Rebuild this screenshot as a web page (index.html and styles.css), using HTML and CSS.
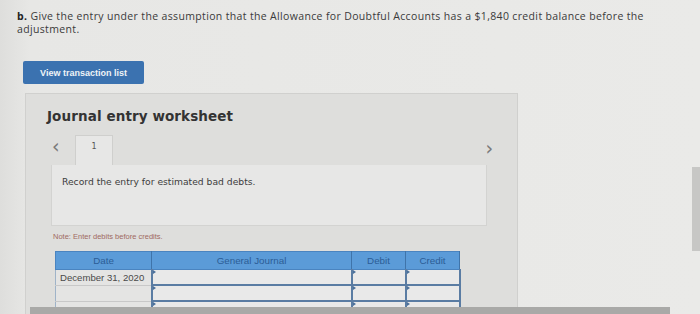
FILE: index.html
```html
<!DOCTYPE html>
<html>
<head>
<meta charset="utf-8">
<link rel="stylesheet" href="styles.css">
</head>
<body>
<div class="page">
  <p class="question">b. Give the entry under the assumption that the Allowance for Doubtful Accounts has a $1,840 credit balance before the adjustment.</p>
  <button class="btn">View transaction list</button>
  <section class="panel">
    <h2 class="title">Journal entry worksheet</h2>
    <div class="nav">
      <span class="chev left">&lsaquo;</span>
      <span class="tab">1</span>
      <span class="chev right">&rsaquo;</span>
    </div>
    <div class="box">Record the entry for estimated bad debts.</div>
    <p class="note">Note: Enter debits before credits.</p>
    <table class="journal">
      <thead>
        <tr><th class="c-date">Date</th><th class="c-gj">General Journal</th><th class="c-dr">Debit</th><th class="c-cr">Credit</th></tr>
      </thead>
      <tbody>
        <tr><td class="date">December 31, 2020</td><td class="in"></td><td class="in"></td><td class="in"></td></tr>
        <tr><td class="date"></td><td class="in"></td><td class="in"></td><td class="in"></td></tr>
        <tr><td class="date"></td><td class="in"></td><td class="in"></td><td class="in"></td></tr>
      </tbody>
    </table>
  </section>
</div>
<div class="scrollbar"></div>
<div class="bottombar"></div>
</body>
</html>
```
FILE: styles.css
```css
html, body {
  margin: 0;
  padding: 0;
  height: 314px;
  overflow: hidden;
}
body {
  background: linear-gradient(90deg, #dededc 0px, #e7e7e5 30px, #e9e9e7 500px, #eaeae8 700px);
  font-family: "Liberation Sans", Arial, sans-serif;
  color: #333;
}
.page {
  padding: 10px 0 0 17px;
}
.question {
  margin: 0;
  width: 645px;
  font-family: "Open Sans", "Liberation Sans", sans-serif;
  font-size: 10.5px;
  letter-spacing: 0.35px;
  line-height: 13px;
  color: #3a3a3a;
}
.question::first-letter {
  font-weight: bold;
  color: #222;
}
.btn {
  display: block;
  margin: 25px 0 0 6px;
  width: 121px;
  height: 23px;
  padding: 0;
  border: none;
  border-radius: 2px;
  background: #3b72b0;
  color: #eef2f7;
  font-family: "Liberation Sans", Arial, sans-serif;
  font-weight: bold;
  font-size: 9px;
}
.panel {
  margin: 9px 0 0 8px;
  width: 493px;
  height: 230px;
  background: #dededc;
  border: 1px solid #d0d0ce;
  border-bottom: none;
  box-sizing: border-box;
  padding: 0 0 0 25px;
}
.title {
  margin: 14px 0 0 -4px;
  font-family: Verdana, "DejaVu Sans", sans-serif;
  font-size: 13.5px;
  font-weight: bold;
  color: #333;
  line-height: 16px;
  letter-spacing: 0.1px;
}
.nav {
  display: flex;
  align-items: flex-start;
  margin-top: 11px;
  height: 30px;
  width: 436px;
}
.chev {
  font-family: "DejaVu Sans", sans-serif;
  font-size: 19px;
  line-height: 14px;
  color: #7a7a7a;
  margin-top: 4px;
}
.chev.left {
  margin-left: 1px;
  width: 23px;
}
.tab {
  width: 38px;
  height: 30px;
  box-sizing: border-box;
  background: #e7e7e6;
  border: 1px solid #cfcfcd;
  border-bottom: none;
  text-align: center;
  font-size: 8px;
  line-height: 22px;
  color: #555;
  font-family: Verdana, "DejaVu Sans", sans-serif;
}
.chev.right {
  margin-left: auto;
  margin-top: 6px;
  margin-right: -6px;
}
.box {
  width: 436px;
  height: 61px;
  box-sizing: border-box;
  background: #e7e7e6;
  border: 1px solid #d3d3d1;
  border-top: none;
  padding: 11px 0 0 10px;
  font-family: Verdana, "DejaVu Sans", sans-serif;
  font-size: 9.2px;
  color: #3d3d3d;
}
.note {
  margin: 6px 0 0 2px;
  font-size: 7.5px;
  color: #a06a62;
  line-height: 9px;
}
.journal {
  margin: 10px 0 0 4px;
  border-collapse: collapse;
  width: 400px;
  table-layout: fixed;
  font-family: "Liberation Sans", Arial, sans-serif;
}
.journal th {
  background: #5b9bd8;
  color: #2c5d96;
  font-size: 9.8px;
  font-weight: normal;
  height: 17px;
  padding: 0;
  border: 1px solid #4a84c0;
  border-right-color: #3f74aa;
}
.c-date { width: 95px; }
.c-gj { width: 199px; }
.c-dr { width: 53px; }
.c-cr { width: 53px; }
.journal td {
  height: 14px;
  padding: 0;
  background: #e4e4e3;
  font-size: 9.6px;
}
.journal td.date {
  border: 1px solid #c8c8c8;
  border-left: 1px solid #9fb3c8;
  color: #4a4a4a;
  padding-left: 4px;
  white-space: nowrap;
  overflow: hidden;
}
.journal td.in {
  background: #e9e9e9;
  border: 2px solid #5a7ca3;
  border-top-width: 1px;
  position: relative;
}
.journal td.in::before {
  content: "";
  position: absolute;
  left: 0;
  top: 0;
  border-left: 3px solid #4a6f99;
  border-top: 2px solid transparent;
  border-bottom: 2px solid transparent;
}
.scrollbar {
  position: fixed;
  right: 0;
  top: 167px;
  width: 8px;
  height: 84px;
  background: #c7c7c5;
}
.bottombar {
  position: fixed;
  left: 30px;
  top: 307px;
  width: 640px;
  height: 7px;
  background: #a9a9a7;
}
```
